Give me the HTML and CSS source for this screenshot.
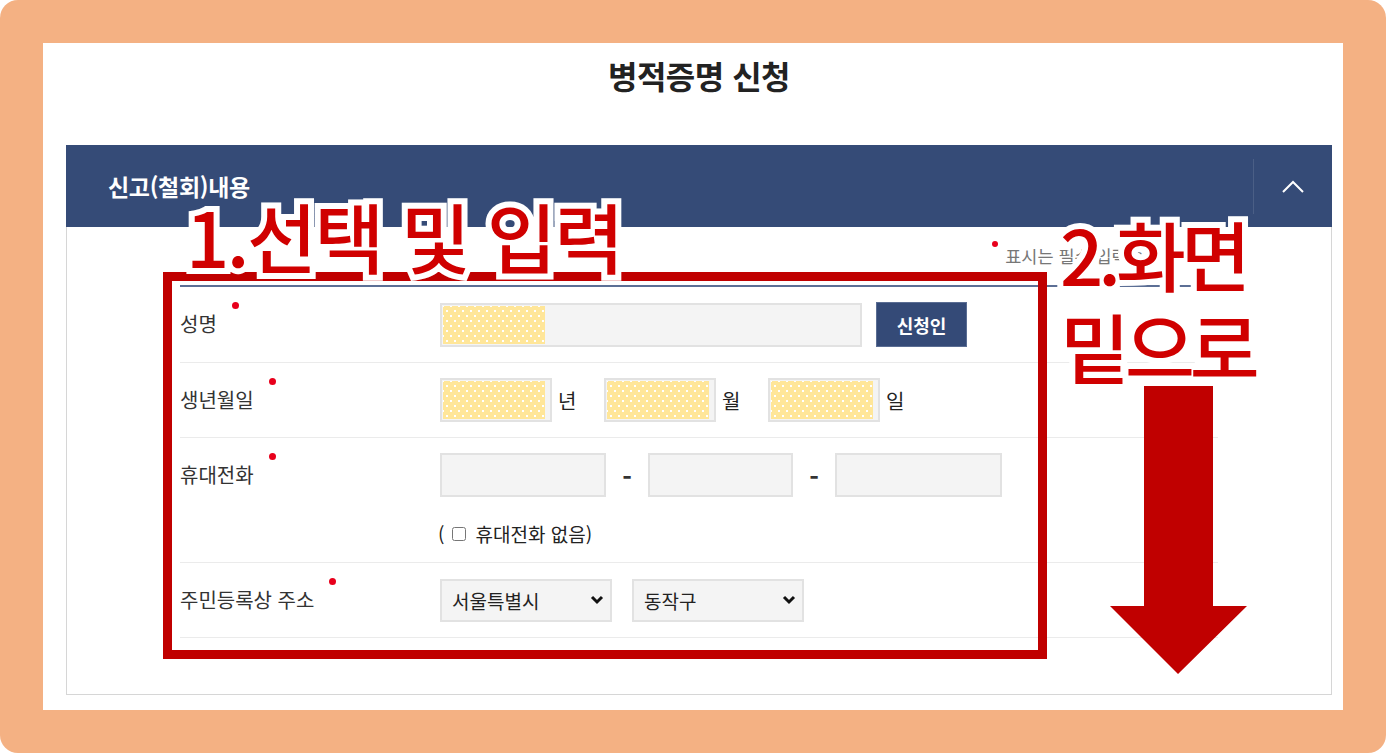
FILE: index.html
```html
<!DOCTYPE html>
<html lang="ko">
<head>
  <meta charset="UTF-8">
  <meta name="viewport" content="width=device-width, initial-scale=1.0">
  <title>병적증명 신청</title>
  <link rel="stylesheet" href="styles.css">
</head>
<body>
  <div class="frame">
    <div class="page">
      <div class="wrap">
        <h1 class="title">병적증명 신청</h1>
        <div class="panel">
          <div class="panel-head">
            <h2>신고(철회)내용</h2>
            <div class="toggle">
              <svg width="22" height="13" viewBox="0 0 22 13"><polyline points="1,12 11,2 21,12" fill="none" stroke="#fff" stroke-width="2"/></svg>
            </div>
          </div>
          <div class="panel-body">
            <p class="note"><span class="dot"></span>표시는 필수 입력 항목입니다.</p>
            <div class="form">
              <div class="row">
                <div class="label req">성명</div>
                <div class="field">
                  <div class="input w-name"><div class="mask"></div></div>
                  <button class="btn">신청인</button>
                </div>
              </div>
              <div class="row">
                <div class="label req">생년월일</div>
                <div class="field">
                  <div class="input w-date"><div class="mask"></div></div>
                  <span class="unit">년</span>
                  <div class="input w-date"><div class="mask"></div></div>
                  <span class="unit">월</span>
                  <div class="input w-date"><div class="mask"></div></div>
                  <span class="unit">일</span>
                </div>
              </div>
              <div class="row">
                <div class="label req">휴대전화</div>
                <div class="field-col">
                  <div class="field">
                    <div class="input w-tel1"></div>
                    <span class="dash">-</span>
                    <div class="input w-tel2"></div>
                    <span class="dash">-</span>
                    <div class="input w-tel3"></div>
                  </div>
                  <label class="check">(<input type="checkbox"> 휴대전화 없음)</label>
                </div>
              </div>
              <div class="row">
                <div class="label req">주민등록상 주소</div>
                <div class="field">
                  <div class="select">
                    <span>서울특별시</span>
                    <svg width="14" height="10" viewBox="0 0 14 10"><polyline points="2,2 7,7 12,2" fill="none" stroke="#111" stroke-width="3"/></svg>
                  </div>
                  <div class="select">
                    <span>동작구</span>
                    <svg width="14" height="10" viewBox="0 0 14 10"><polyline points="2,2 7,7 12,2" fill="none" stroke="#111" stroke-width="3"/></svg>
                  </div>
                </div>
              </div>
            </div>
          </div>
        </div>
      </div>
    </div>
  </div>

  <!-- 캡처 위 안내 표시 -->
  <div class="mark-box"></div>
  <div class="mark-text step1">1.선택 및 입력</div>
  <div class="mark-text step2">2.화면<br>밑으로</div>
  <svg class="mark-arrow" width="142" height="292" viewBox="0 0 142 292">
    <polygon points="36,0 105,0 105,220 139,220 70,288 2,220 36,220" fill="#c00000"/>
  </svg>
</body>
</html>
```

FILE: styles.css
```css
* {
  box-sizing: border-box;
  margin: 0;
  padding: 0;
}
body {
  font-family: 'Noto Sans CJK KR', 'Noto Sans', sans-serif;
  background: #fff;
  color: #333;
  width: 1386px;
  height: 753px;
  overflow: hidden;
  position: relative;
}
.frame {
  background: #f4b183;
  border-radius: 18px;
  padding: 43px;
  height: 753px;
}
.page {
  background: #fff;
  height: 667px;
}
.wrap {
  margin: 0 11px 0 23px;
}
.title {
  text-align: center;
  font-size: 32px;
  font-weight: 700;
  line-height: 40px;
  color: #222;
  padding: 12px 0 50px;
  letter-spacing: -0.5px;
}
.panel-head {
  background: #354b77;
  height: 82px;
  display: flex;
  align-items: center;
  justify-content: space-between;
  padding-left: 42px;
}
.panel-head h2 {
  color: #fff;
  font-size: 23px;
  font-weight: 700;
  letter-spacing: -0.3px;
}
.toggle {
  width: 79px;
  height: 55px;
  border-left: 1px solid #4b5f86;
  display: flex;
  align-items: center;
  justify-content: center;
}
.panel-body {
  border: 1px solid #d6d6d6;
  border-top: none;
  padding: 0 113px 56px;
}
.note {
  text-align: right;
  font-size: 17.5px;
  line-height: 18px;
  color: #777;
  padding-top: 20px;
  margin-bottom: 20px;
}
.note .dot {
  display: inline-block;
  width: 6px;
  height: 6px;
  border-radius: 50%;
  background: #e8001c;
  vertical-align: top;
  margin-right: 7px;
  position: relative;
  top: -6px;
}
.form {
  border-top: 2px solid #5c6f95;
}
.row {
  display: flex;
  padding: 15px 0;
  border-bottom: 1px solid #ebebeb;
}
.label {
  width: 260px;
  flex-shrink: 0;
  font-size: 20px;
  line-height: 44px;
  color: #333;
}
.label.req::after {
  content: '';
  display: inline-block;
  width: 7px;
  height: 7px;
  border-radius: 50%;
  background: #e8001c;
  vertical-align: top;
  margin-left: 15px;
}
.field {
  display: flex;
  align-items: center;
}
.input {
  height: 44px;
  background: #f4f4f4;
  border: 2px solid #e2e2e2;
  display: flex;
  padding: 1px;
}
.mask {
  height: 100%;
  width: 102px;
  background-color: #ffe699;
  background-image: radial-gradient(circle, #fff 0.8px, transparent 1.2px), radial-gradient(circle, #fff 0.8px, transparent 1.2px);
  background-size: 8px 10px;
  background-position: 0 0, 4px 5px;
}
.w-name { width: 422px; }
.w-date { width: 112px; }
.w-tel1 { width: 166px; }
.w-tel2 { width: 145px; }
.w-tel3 { width: 167px; }
.btn {
  margin-left: 14px;
  width: 91px;
  height: 45px;
  background: #344a77;
  border: 1px solid #5a6d93;
  color: #fff;
  font-family: inherit;
  font-size: 18px;
  font-weight: 700;
}
.unit {
  width: 52px;
  padding-left: 6px;
  font-size: 20px;
  color: #222;
}
.dash {
  width: 42px;
  text-align: center;
  font-size: 26px;
  font-weight: 700;
  color: #333;
}
.check {
  display: flex;
  align-items: center;
  margin-top: 24px;
  line-height: 26px;
  font-size: 19px;
  color: #222;
  margin-left: -2px;
}
.check input {
  width: 14px;
  height: 14px;
  margin: 0 9px 0 8px;
}
.select {
  width: 172px;
  height: 43px;
  background: #f4f4f4;
  border: 2px solid #e2e2e2;
  margin-right: 20px;
  display: flex;
  align-items: center;
  justify-content: space-between;
  padding: 0 6px 0 10px;
  font-size: 19px;
  color: #222;
}

/* 안내 표시 (빨간 상자, 글자, 화살표) */
.mark-box {
  position: absolute;
  left: 163px;
  top: 272px;
  width: 884px;
  height: 387px;
  border: 9px solid #c00000;
}
.mark-text {
  position: absolute;
  color: #d00000;
  font-weight: 500;
  font-size: 76px;
  letter-spacing: -5px;
  -webkit-text-stroke: 12px #fff;
  paint-order: stroke fill;
  white-space: nowrap;
}
.step1 {
  left: 186px;
  top: 197px;
  line-height: 76px;
  letter-spacing: -2.5px;
}
.step2 {
  left: 1060px;
  top: 207px;
  line-height: 92px;
}
.mark-arrow {
  position: absolute;
  left: 1108px;
  top: 386px;
}
```
